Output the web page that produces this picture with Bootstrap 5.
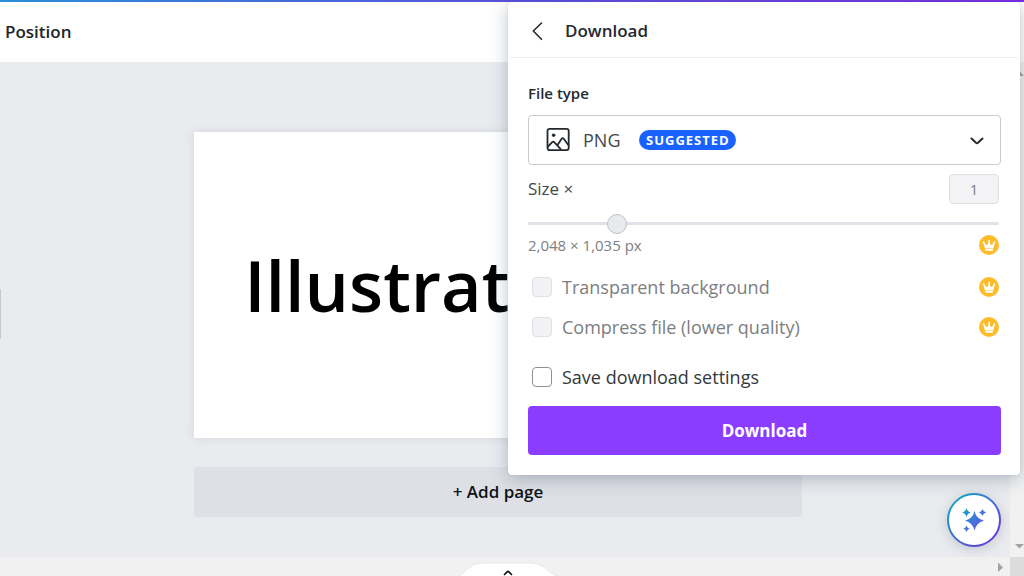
<!DOCTYPE html>
<html lang="en">
<head>
<meta charset="utf-8">
<meta name="viewport" content="width=device-width, initial-scale=1">
<title>Download</title>
<link rel="stylesheet" href="https://cdn.jsdelivr.net/npm/bootstrap@5.3.0/dist/css/bootstrap.min.css">
<style>
  body { font-family: "Open Sans", "Noto Sans", sans-serif; font-size: 18px; line-height: 24px; color: #0d1216; background: #eaebef; }
  .top-strip { height: 2px; background: linear-gradient(90deg, #2a8fd8, #5a50dc 50%, #7d2ae8); }
  .toolbar { height: 60px; padding: 0 5px; }
  .toolbar .btn, .add-page, .panel-head { font-size: 17px; font-weight: 600; }
  .stage { padding: 70px 14px 40px 0; }
  .artboard { width: 61%; height: 306px; padding-left: 50px; box-shadow: 0 0 8px rgba(57, 76, 96, .15); }
  .artboard h1 { font-size: 70px; line-height: 84px; font-weight: 600; color: #000; }
  .add-page { width: 61%; height: 50px; margin-top: 29px; background: #dfe0e5; color: #0d1216; border-radius: 4px; }
  .side-handle { left: 0; top: 227px; width: 1px; height: 50px; background: #c6c8cc; }
  .track { background: #f1f1f1; }
  .v-track { width: 14px; }
  .h-track { height: 19px; }
  .corner { width: 14px; background: #dcdcdc; }
  .panel { top: 2px; right: 4px; width: 50%; border-radius: 4px; box-shadow: 0 0 1px rgba(64, 87, 109, .3), 0 4px 18px rgba(64, 87, 109, .35); color: #24292e; z-index: 3; }
  .panel-head { height: 56px; padding: 2px 20px 0; gap: 18px; border-bottom: 1px solid #ebecee; margin: 0 2px; }
  .panel-body { padding: 23px 19px 20px 20px; }
  .file-label { font-size: 15px; font-weight: 600; }
  .type-box { height: 50px; margin-top: 10px; }
  .type-box select { appearance: none; border: 1px solid #c8cacd; border-radius: 4px; padding-left: 54px; font-size: 18px; color: #43484d; background: #fff; }
  .type-box svg { top: 12px; pointer-events: none; }
  .type-icon { left: 18px; }
  .type-arrow { right: 12px; }
  .tag-pill { left: 111px; top: 15px; height: 20px; padding: 0 6px 0 7px; border-radius: 10px; background: #1a62ff; color: #fff; font-size: 13px; line-height: 20px; font-weight: 700; letter-spacing: 1px; pointer-events: none; }
  .size-row { margin-top: 9px; padding-right: 2px; font-size: 17px; color: #43484d; }
  .size-row input { width: 50px; height: 30px; border: 1px solid #dfe1e5; border-radius: 4px; background: #f3f3f6; color: #7c7e80; font-size: 15px; }
  .slider { appearance: none; height: 20px; margin-top: 9px; background: transparent; width: calc(100% - 2px); }
  .slider::-webkit-slider-runnable-track { height: 3px; border-radius: 2px; background: #dfe2e7; }
  .slider::-webkit-slider-thumb { appearance: none; width: 20px; height: 20px; margin-top: -8px; border-radius: 50%; background: #e9eaee; border: 1px solid #bfc2c9; }
  .line { padding-right: 2px; }
  .dims { font-size: 15px; color: #7c7e80; }
  .check-line { height: 40px; padding-left: 4px; gap: 10px; }
  .check-line label { color: #7c7e80; }
  .check-line input { appearance: none; width: 20px; height: 20px; margin: 0; border: 1px solid #dfe1e5; border-radius: 4px; background: #f1f2f4; }
  .check-line .live { border: 1px solid #8d9298; background: #fff; }
  .check-line .live + label { color: #33383d; }
  .first-check { margin-top: 10px; }
  .save-line { margin-top: 10px; }
  .go { height: 49px; margin-top: 9px; border-radius: 4px; background: #8b3dff; color: #fff; font-size: 17px; font-weight: 700; }
  .assist { right: 9px; bottom: 10px; width: 54px; height: 54px; z-index: 2; border-radius: 50%; filter: drop-shadow(0 2px 6px rgba(64, 87, 109, .25)); }
  .drawer { bottom: 0; left: 50%; margin-left: -62px; width: 115px; height: 14px; }
</style>
</head>
<body>
<svg class="d-none" aria-hidden="true">
  <symbol id="crown" viewBox="0 0 20 20">
    <circle cx="10" cy="10" r="10" fill="#fdbc2a"/>
    <path fill="#fff" d="M6 13.400 4.400 8.200a1 1 0 1 1 1.200-.4Q7 10.500 8.300 9.800 9.500 9 9.500 6.600a1 1 0 1 1 1.200 0Q10.700 9 11.900 9.800 13.200 10.500 14.600 7.800a1 1 0 1 1 1.200.4L14.200 13.400ZM6.200 14h7.800v1.100q0 .6-.6.6H6.800q-.6 0-.6-.6Z"/>
  </symbol>
</svg>
<div class="d-flex flex-column vh-100 position-relative overflow-hidden">
  <div class="top-strip"></div>
  <header class="toolbar bg-white d-flex align-items-center">
    <button type="button" class="btn p-0 border-0">Position</button>
  </header>

  <div class="d-flex flex-grow-1">
    <main class="stage flex-grow-1 d-flex flex-column align-items-center position-relative">
      <span class="side-handle position-absolute"></span>
      <div class="artboard bg-white d-flex align-items-center">
        <h1 class="m-0">Illustrat</h1>
      </div>
      <button type="button" class="btn add-page border-0">+ Add page</button>
      <button type="button" class="assist btn p-0 border-0 position-absolute" aria-label="Assistant">
        <svg class="d-block" width="54" height="54" viewBox="0 0 54 54">
          <defs>
            <linearGradient id="ring" x1="0" y1="0" x2="1" y2="1"><stop offset="0.1" stop-color="#12a5c4"/><stop offset="0.9" stop-color="#6a35d8"/></linearGradient>
            <linearGradient id="spark" gradientUnits="userSpaceOnUse" x1="14" y1="16" x2="38" y2="38"><stop offset="0" stop-color="#0aa5b8"/><stop offset="0.5" stop-color="#4178d8"/><stop offset="1" stop-color="#6a4be0"/></linearGradient>
          </defs>
          <circle cx="27" cy="27" r="26" fill="#fff" stroke="url(#ring)" stroke-width="2"/>
          <path fill="url(#spark)" d="M27.500 18Q29.300 26 37 27.700Q29.300 29.500 27.500 37.500Q25.700 29.500 18 27.700Q25.700 26 27.500 18ZM19.500 15Q20.400 18.700 24 19.500Q20.400 20.400 19.500 24Q18.600 20.400 15 19.500Q18.600 18.700 19.500 15ZM35.500 16Q36.200 18.800 39 19.500Q36.200 20.200 35.500 23Q34.800 20.200 32 19.500Q34.800 18.800 35.500 16ZM19.500 32.500Q20.200 35.100 22.800 35.700Q20.200 36.300 19.500 39Q18.800 36.300 16.200 35.700Q18.800 35.100 19.500 32.500Z"/>
        </svg>
      </button>
    </main>
    <div class="track v-track d-flex flex-column justify-content-between align-items-end">
      <svg width="9" height="18" viewBox="0 0 9 18"><path fill="#a3a3a3" d="M0 14 4.500 9 9 14Z"/></svg>
      <svg width="9" height="18" viewBox="0 0 9 18"><path fill="#a3a3a3" d="M0 5H9L4.500 9.500Z"/></svg>
    </div>
  </div>

  <div class="track h-track d-flex justify-content-end">
    <svg width="14" height="19" viewBox="0 0 14 19"><path fill="#a3a3a3" d="M2 5.500 7 10.500 2 15Z"/></svg>
    <div class="corner"></div>
  </div>
  <button type="button" class="drawer btn p-0 border-0 position-absolute" aria-label="Show pages">
    <svg class="d-block" width="115" height="14" viewBox="0 0 115 14">
      <path fill="#fff" stroke="#e8e9eb" d="M7 14.500C17 12 17 1 34 1H79C96 1 98 12 108 14.500Z"/>
      <path fill="none" stroke="#0d1216" stroke-width="1.700" stroke-linecap="round" d="m54.500 12.500 2.600-2.600q.9-.8 1.800 0l2.600 2.600"/>
    </svg>
  </button>

  <section class="panel bg-white position-absolute">
    <div class="panel-head d-flex align-items-center">
      <button type="button" class="btn p-0 border-0" aria-label="Back">
        <svg class="d-block" width="17" height="24" viewBox="0 0 17 24"><path fill="none" stroke="#24292e" stroke-width="1.600" stroke-linecap="round" stroke-linejoin="round" d="m11.500 4-8.200 8 8.200 8.300"/></svg>
      </button>
      <span>Download</span>
    </div>
    <form class="panel-body d-flex flex-column">
      <label class="file-label" for="type">File type</label>
      <div class="type-box position-relative">
        <select id="type" class="w-100 h-100"><option>PNG</option></select>
        <svg class="type-icon position-absolute" width="25" height="25" viewBox="0 0 25 25" fill="none" stroke="#24292e" stroke-width="1.800" stroke-linecap="round" stroke-linejoin="round">
          <rect x="1.500" y="1.900" width="21.200" height="21.200" rx="2"/><circle cx="7.600" cy="8.200" r="1.300" fill="#24292e" stroke-width="1"/>
          <path d="m2 19.500 4.200-4.300q1-1 2 0l6.500 7M11.500 18l4.200-6.300q1-1.100 2 0l4.800 6.500"/>
        </svg>
        <span class="tag-pill position-absolute">SUGGESTED</span>
        <svg class="type-arrow position-absolute" width="24" height="24" viewBox="0 0 24 24"><path fill="none" stroke="#24292e" stroke-width="2" stroke-linecap="round" d="m6.500 11.500 4.500 4.300q1 .8 2 0l4.500-4.300"/></svg>
      </div>
      <div class="size-row d-flex align-items-center justify-content-between">
        <label for="scale">Size ×</label>
        <input id="scale" type="text" class="text-center p-0" value="1" disabled>
      </div>
      <input type="range" class="slider" min="0" max="1000" value="176" disabled aria-label="Size">
      <div class="line d-flex align-items-center justify-content-between">
        <span class="dims">2,048 × 1,035 px</span>
        <svg width="20" height="20"><use href="#crown"/></svg>
      </div>
      <div class="line check-line first-check d-flex align-items-center">
        <input type="checkbox" id="transparent" disabled><label for="transparent" class="me-auto">Transparent background</label>
        <svg width="20" height="20"><use href="#crown"/></svg>
      </div>
      <div class="line check-line d-flex align-items-center">
        <input type="checkbox" id="compress" disabled><label for="compress" class="me-auto">Compress file (lower quality)</label>
        <svg width="20" height="20"><use href="#crown"/></svg>
      </div>
      <div class="line check-line save-line d-flex align-items-center">
        <input type="checkbox" id="save" class="live"><label for="save">Save download settings</label>
      </div>
      <button type="button" class="btn go border-0 w-100">Download</button>
    </form>
  </section>
</div>
<script src="https://cdn.jsdelivr.net/npm/bootstrap@5.3.0/dist/js/bootstrap.bundle.min.js"></script>
</body>
</html>
